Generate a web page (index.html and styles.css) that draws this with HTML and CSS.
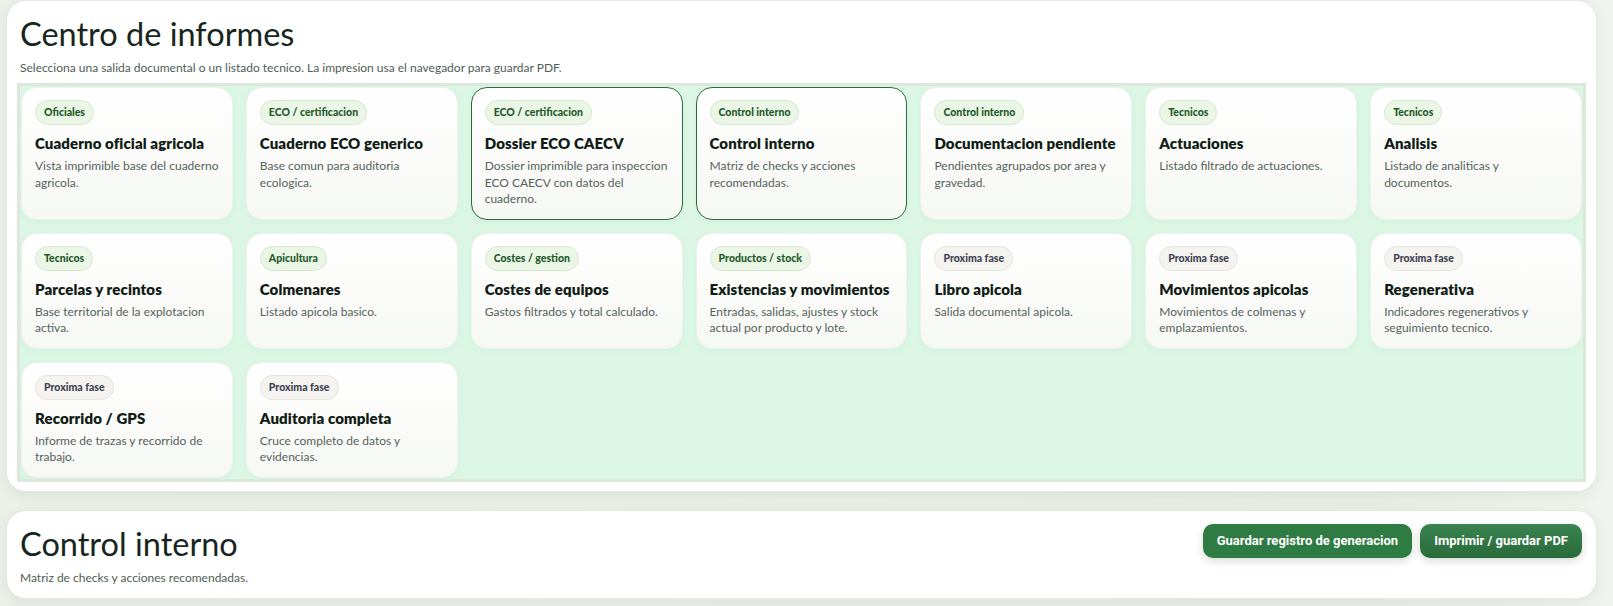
FILE: index.html
```html
<!DOCTYPE html>
<html lang="es">
<head>
    <meta charset="UTF-8">
    <meta name="viewport" content="width=device-width, initial-scale=1.0">
    <title>Centro de informes</title>
    <link rel="stylesheet" href="styles.css">
</head>
<body>
    <section class="panel">
        <h1>Centro de informes</h1>
        <p class="sub">Selecciona una salida documental o un listado tecnico. La impresion usa el navegador para guardar PDF.</p>

        <div class="report-grid">
            <div class="report-card">
                <span class="pill">Oficiales</span>
                <h3>Cuaderno oficial agricola</h3>
                <p>Vista imprimible base del cuaderno agricola.</p>
            </div>
            <div class="report-card">
                <span class="pill">ECO / certificacion</span>
                <h3>Cuaderno ECO generico</h3>
                <p>Base comun para auditoria ecologica.</p>
            </div>
            <div class="report-card active">
                <span class="pill">ECO / certificacion</span>
                <h3>Dossier ECO CAECV</h3>
                <p>Dossier imprimible para inspeccion ECO CAECV con datos del cuaderno.</p>
            </div>
            <div class="report-card active">
                <span class="pill">Control interno</span>
                <h3>Control interno</h3>
                <p>Matriz de checks y acciones recomendadas.</p>
            </div>
            <div class="report-card">
                <span class="pill">Control interno</span>
                <h3>Documentacion pendiente</h3>
                <p>Pendientes agrupados por area y gravedad.</p>
            </div>
            <div class="report-card">
                <span class="pill">Tecnicos</span>
                <h3>Actuaciones</h3>
                <p>Listado filtrado de actuaciones.</p>
            </div>
            <div class="report-card">
                <span class="pill">Tecnicos</span>
                <h3>Analisis</h3>
                <p>Listado de analiticas y documentos.</p>
            </div>

            <div class="report-card">
                <span class="pill">Tecnicos</span>
                <h3>Parcelas y recintos</h3>
                <p>Base territorial de la explotacion activa.</p>
            </div>
            <div class="report-card">
                <span class="pill">Apicultura</span>
                <h3>Colmenares</h3>
                <p>Listado apicola basico.</p>
            </div>
            <div class="report-card">
                <span class="pill">Costes / gestion</span>
                <h3>Costes de equipos</h3>
                <p>Gastos filtrados y total calculado.</p>
            </div>
            <div class="report-card">
                <span class="pill">Productos / stock</span>
                <h3>Existencias y movimientos</h3>
                <p>Entradas, salidas, ajustes y stock actual por producto y lote.</p>
            </div>
            <div class="report-card">
                <span class="pill pill-next">Proxima fase</span>
                <h3>Libro apicola</h3>
                <p>Salida documental apicola.</p>
            </div>
            <div class="report-card">
                <span class="pill pill-next">Proxima fase</span>
                <h3>Movimientos apicolas</h3>
                <p>Movimientos de colmenas y emplazamientos.</p>
            </div>
            <div class="report-card">
                <span class="pill pill-next">Proxima fase</span>
                <h3>Regenerativa</h3>
                <p>Indicadores regenerativos y seguimiento tecnico.</p>
            </div>

            <div class="report-card">
                <span class="pill pill-next">Proxima fase</span>
                <h3>Recorrido / GPS</h3>
                <p>Informe de trazas y recorrido de trabajo.</p>
            </div>
            <div class="report-card">
                <span class="pill pill-next">Proxima fase</span>
                <h3>Auditoria completa</h3>
                <p>Cruce completo de datos y evidencias.</p>
            </div>
        </div>
    </section>

    <section class="panel panel-head">
        <div>
            <h1>Control interno</h1>
            <p class="sub">Matriz de checks y acciones recomendadas.</p>
        </div>
        <div class="actions">
            <button class="btn">Guardar registro de generacion</button>
            <button class="btn btn-print">Imprimir / guardar PDF</button>
        </div>
    </section>
</body>
</html>
```

FILE: styles.css
```css
body {
    font-family: "Segoe UI", Lato, "Liberation Sans", sans-serif;
    background: linear-gradient(90deg, #ebf0e9 0%, #e8eee6 85%, #f0f4ee 100%);
    color: #17261d;
    margin: 0;
    padding: 0 16px 0 6px;
}
.panel {
    background-color: #fff;
    border: 1px solid #e2eadf;
    border-radius: 20px;
    box-shadow: 0 4px 14px rgba(40, 70, 45, 0.07);
    padding: 13px 13px 12px;
    margin-bottom: 18px;
}
.panel h1 {
    font-size: 32.5px;
    font-weight: normal;
    line-height: 40px;
    margin: 0;
}
.panel .sub {
    font-size: 12px;
    line-height: 16px;
    color: #4f5d55;
    margin: 6px 0 0;
}
.report-grid {
    display: grid;
    grid-template-columns: repeat(7, 1fr);
    gap: 13px;
    margin-top: 10px;
    padding: 1px;
    background-color: #dcf7e6;
    outline: 3px solid #dde7dc;
}
.report-card {
    background: linear-gradient(180deg, #ffffff 0%, #f6f8f4 100%);
    border: 1px solid #edf2eb;
    border-radius: 16px;
    box-shadow: 0 2px 8px rgba(30, 80, 40, 0.05);
    padding: 12px 13px 11px;
}
.report-card.active {
    border-color: #2c6a3a;
}
.pill {
    display: inline-block;
    height: 23px;
    line-height: 23px;
    padding: 0 8px;
    border: 1px solid #d5eacd;
    border-radius: 999px;
    background-color: #ebf6e6;
    color: #1f5a2b;
    font-size: 10.5px;
    font-weight: 900;
}
.pill-next {
    background-color: #f4f3f0;
    border-color: #e6e4df;
    color: #3e4552;
}
.report-card h3 {
    font-size: 15px;
    font-weight: 800;
    letter-spacing: 0.1px;
    line-height: 19px;
    margin: 9px 0 5px;
    color: #111c16;
}
.report-card p {
    font-size: 12px;
    line-height: 16.5px;
    color: #56625b;
    margin: 0;
}
.panel-head {
    display: flex;
    justify-content: space-between;
    align-items: flex-start;
}
.actions {
    display: flex;
    gap: 8px;
    padding-right: 1px;
}
.btn {
    font-family: Roboto, "Liberation Sans", sans-serif;
    font-size: 13px;
    font-weight: bold;
    color: #fff;
    height: 34px;
    padding: 0 14px;
    border: none;
    border-radius: 10px;
    background-color: #2f7b44;
    box-shadow: 0 3px 8px rgba(20, 60, 30, 0.18);
    cursor: pointer;
}
.btn-print {
    background: linear-gradient(180deg, #3a8450 0%, #2a6a3a 100%);
}
```
